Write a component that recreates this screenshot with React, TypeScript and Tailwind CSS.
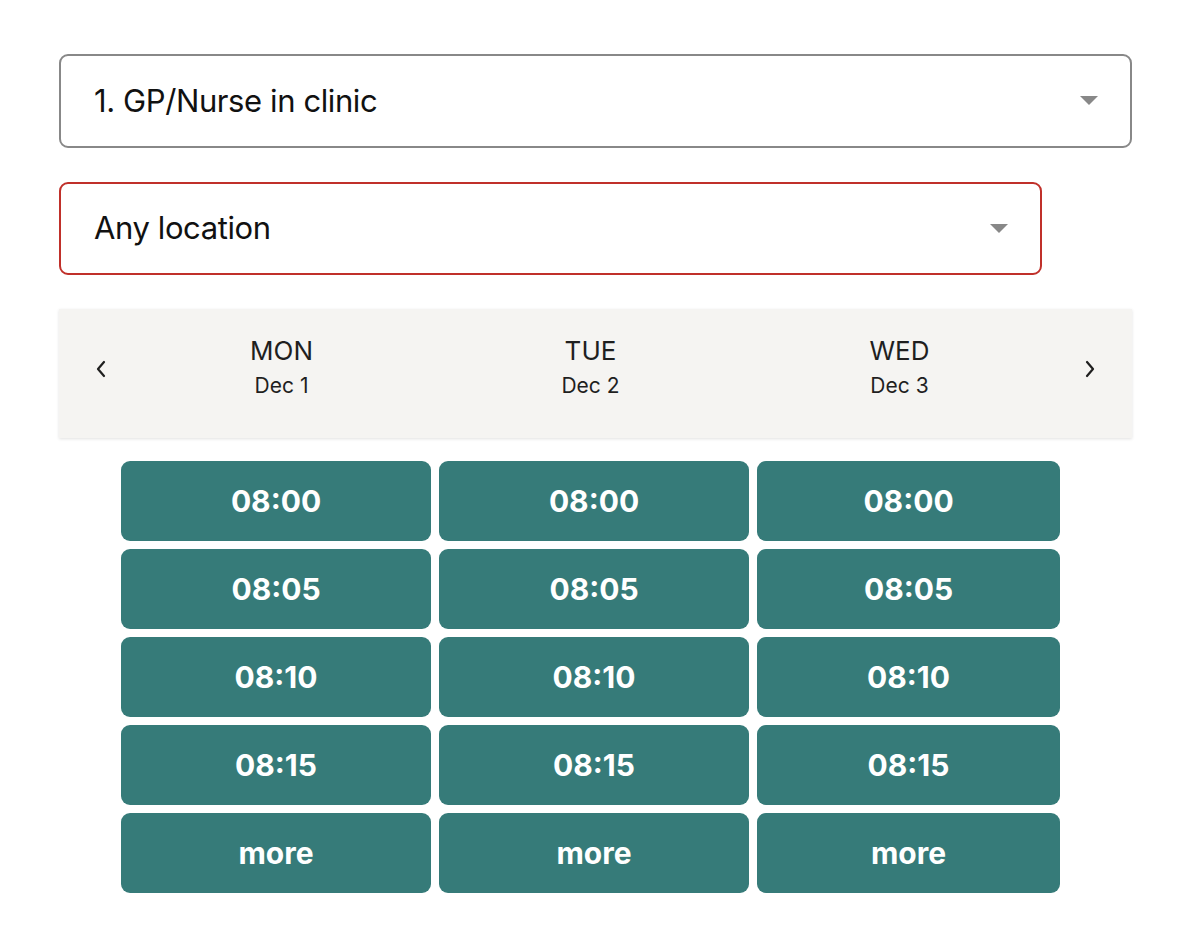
import React from "react";

const Caret = () => (
  <svg width="18" height="10" viewBox="0 0 18 10" className="shrink-0">
    <path d="M0 0 L18 0 L9 9 Z" fill="#888888" />
  </svg>
);

const Chevron = ({ dir }: { dir: "l" | "r" }) => (
  <svg width="12" height="20" viewBox="0 0 12 20">
    <path
      d={dir === "l" ? "M9 3 L3 10 L9 17" : "M3 3 L9 10 L3 17"}
      fill="none"
      stroke="#1f1f1f"
      strokeWidth="2.2"
      strokeLinecap="round"
      strokeLinejoin="round"
    />
  </svg>
);

const days = [
  { d: "MON", date: "Dec 1" },
  { d: "TUE", date: "Dec 2" },
  { d: "WED", date: "Dec 3" },
];

const times = ["08:00", "08:05", "08:10", "08:15", "more"];

export default function App() {
  return (
    <div
      className="w-[1186px] h-[950px] bg-white pt-[54px] pl-[59px]"
      style={{ fontFamily: "Inter, 'Noto Sans', sans-serif" }}
    >
      <div className="w-[1073px] h-[94px] border-2 border-[#888888] rounded-[9px] flex items-center justify-between pl-[33px] pr-[32px]">
        <span className="text-[31px] text-[#111] tracking-[-0.4px]">1. GP/Nurse in clinic</span>
        <Caret />
      </div>
      <div className="mt-[34px] w-[983px] h-[93px] border-2 border-[#c0302a] rounded-[9px] flex items-center justify-between pl-[33px] pr-[32px]">
        <span className="text-[31px] text-[#111] tracking-[-0.4px]">Any location</span>
        <Caret />
      </div>
      <div className="mt-[34px] w-[1073px] h-[129px] bg-[#f5f4f2] shadow-[0_1px_3px_rgba(0,0,0,0.12)] flex items-center">
        <div className="w-[68px] flex justify-end pr-[20px] pb-[10px]">
          <Chevron dir="l" />
        </div>
        <div className="flex-1 grid grid-cols-3 pb-[10px]">
          {days.map((x) => (
            <div key={x.d} className="flex flex-col items-center text-[#1f1f1f]">
              <span className="text-[26px] leading-[34px]">{x.d}</span>
              <span className="text-[21px] leading-[36px]">{x.date}</span>
            </div>
          ))}
        </div>
        <div className="w-[78px] flex justify-start pl-[30px] pb-[10px]">
          <Chevron dir="r" />
        </div>
      </div>
      <div className="mt-[23px] ml-[62px] grid grid-cols-[310px_310px_303px] gap-[8px]">
        {times.map((t) =>
          [0, 1, 2].map((c) => (
            <div
              key={t + c}
              className="h-[80px] rounded-[9px] bg-[#367b79] flex items-center justify-center text-white text-[30px] font-bold"
            >
              {t}
            </div>
          ))
        )}
      </div>
    </div>
  );
}
